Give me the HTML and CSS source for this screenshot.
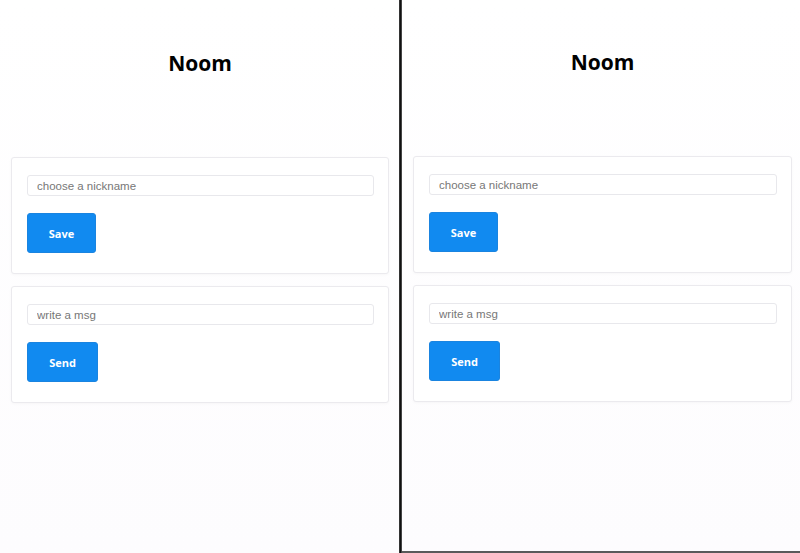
FILE: index.html
```html
<!DOCTYPE html>
<html>
<head>
<meta charset="utf-8">
<title>Noom</title>
<link rel="stylesheet" href="styles.css">
</head>
<body>
<div class="screen">
  <main class="pane pane-left">
    <header class="head"><h1 class="title">Noom</h1></header>
    <section class="card">
      <input class="field" type="text" placeholder="choose a nickname">
      <button class="btn btn-save">Save</button>
    </section>
    <section class="card">
      <input class="field" type="text" placeholder="write a msg">
      <button class="btn btn-send">Send</button>
    </section>
  </main>
  <div class="divider"></div>
  <main class="pane pane-right">
    <header class="head"><h1 class="title">Noom</h1></header>
    <section class="card">
      <input class="field" type="text" placeholder="choose a nickname">
      <button class="btn btn-save">Save</button>
    </section>
    <section class="card">
      <input class="field" type="text" placeholder="write a msg">
      <button class="btn btn-send">Send</button>
    </section>
  </main>
</div>
</body>
</html>
```
FILE: styles.css
```css
* { box-sizing: border-box; }
html, body { margin: 0; padding: 0; }
body {
  width: 800px;
  height: 553px;
  overflow: hidden;
  background: #fff;
}
.screen {
  display: flex;
  height: 553px;
}
.pane {
  display: flex;
  flex-direction: column;
  gap: 12px;
  background: linear-gradient(#ffffff, #fdfcfe);
}
.pane-left {
  width: 399px;
  padding: 0 10px 0 11px;
}
.divider {
  width: 3px;
  background: linear-gradient(90deg, #555 0, #111 1px, #111 2px, #777 3px);
}
.pane-right {
  width: 398px;
  padding: 0 8px 0 11px;
  border-bottom: 2px solid #5a5a5a;
  margin-top: -1px;
}
.head {
  height: 145px;
  display: flex;
  justify-content: center;
  padding-top: 49px;
  align-items: flex-start;
}
.title {
  margin: 0;
  font-family: "Open Sans", "Noto Sans", sans-serif;
  font-weight: 700;
  font-size: 21px;
  line-height: 28px;
  color: #000;
}
.card {
  display: flex;
  flex-direction: column;
  align-items: flex-start;
  gap: 17px;
  padding: 17px 14px 20px 15px;
  background: #fff;
  border: 1px solid #ebeaee;
  border-radius: 3px;
  box-shadow: 0 1px 3px rgba(0,0,0,0.03);
}
.field {
  width: 100%;
  height: 21px;
  margin: 0;
  padding: 0 9px;
  border: 1px solid #e8e8ec;
  border-radius: 3px;
  font-family: "Liberation Sans", Arial, sans-serif;
  font-size: 11.5px;
  color: #333;
  background: #fff;
  outline: none;
}
.field::placeholder { color: #777; }
.btn {
  height: 40px;
  margin: 0;
  border: 1px solid #1a84e0;
  border-radius: 3px;
  background: #118af0;
  color: #fff;
  font-family: "Open Sans", "Noto Sans", sans-serif;
  font-weight: 700;
  font-size: 11px;
  padding: 0;
}
.btn-save { width: 69px; }
.btn-send { width: 71px; }
```
